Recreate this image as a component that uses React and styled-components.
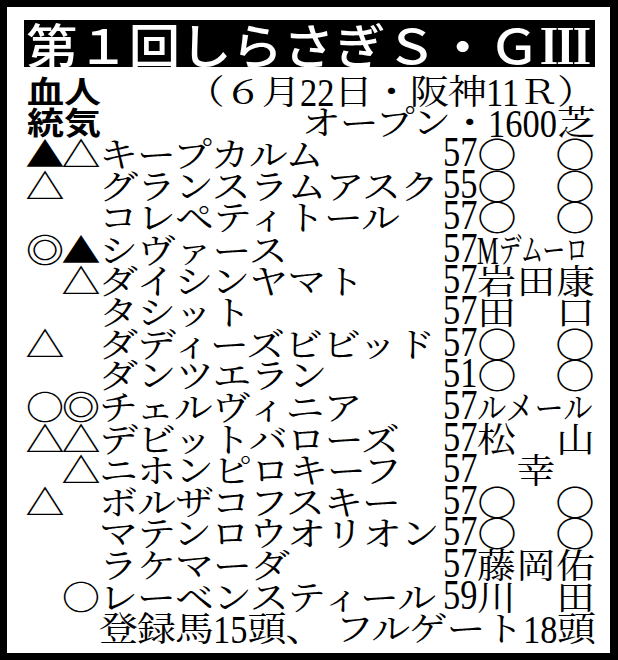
import React from 'react';
import styled, { createGlobalStyle } from 'styled-components';

const GOTHIC = `"Noto Sans CJK JP", "Noto Sans", sans-serif`;
const MINCHO = `"Noto Serif CJK JP", "Noto Sans CJK JP", serif`;
const NUMF = `"Liberation Serif", "DejaVu Serif", serif`;
const SY = 0.87;

const Global = createGlobalStyle`
  html, body { margin: 0; padding: 0; background: #fff; }
  body { width: 618px; height: 660px; overflow: hidden; }
`;

const Frame = styled.div`
  width: 618px;
  height: 660px;
  box-sizing: border-box;
  background: #000;
  padding: 7px 8px 7px 7px;
`;

const Sheet = styled.div`
  height: 100%;
  box-sizing: border-box;
  background: #fff;
  padding: 13px 15px 0 17px;
  display: flex;
  flex-direction: column;
`;

const TitleBar = styled.h1`
  margin: 0;
  height: 47px;
  background: #000;
  color: #fff;
  display: flex;
  align-items: center;
  font-family: ${GOTHIC};
  font-weight: 500;
  font-size: 48px;
  line-height: 47px;
`;

const TitleText = styled.span`
  display: inline-block;
  white-space: nowrap;
  padding-left: 2px;
  transform: scaleX(1.07);
  transform-origin: left center;
`;

const Roman = styled.span`
  font-family: ${MINCHO};
  font-weight: 700;
`;

const Body = styled.div`
  padding-left: 3px;
  display: flex;
  flex-direction: column;
`;

const Header = styled.div`
  margin-top: 8px;
  display: flex;
  flex-direction: column;
`;

const HeadLine = styled.div`
  height: 31px;
  display: flex;
  justify-content: space-between;
  align-items: center;
`;

const HeadLabel = styled.span`
  display: inline-block;
  font-family: ${GOTHIC};
  font-weight: 700;
  font-size: 37px;
  line-height: 31px;
  transform: scaleY(0.82);
  white-space: nowrap;
`;

const Stretch = styled.span`
  display: inline-block;
  font-family: ${MINCHO};
  font-weight: 400;
  font-size: 39px;
  letter-spacing: -1px;
  line-height: 31px;
  white-space: nowrap;
  transform: scaleY(${SY});
`;

const InNum = styled.span`
  display: inline-block;
  font-family: ${NUMF};
  font-weight: 400;
  font-size: 41px;
  letter-spacing: 0;
  transform: scale(0.84, ${1 / SY});
  transform-origin: left center;
  margin-right: ${(p) => -(p.$n || 2) * 3.3}px;
`;

const Rows = styled.div`
  display: flex;
  flex-direction: column;
`;

const Row = styled.div`
  height: 31.6px;
  display: grid;
  grid-template-columns: 36px 36px 344px 34px 118px;
  align-items: center;
`;

const Mark = styled(Stretch)`
  width: 36px;
  font-size: 39px;
  letter-spacing: 0;
  display: flex;
  justify-content: center;
`;

const Name = styled(Stretch)``;

const Weight = styled.span`
  display: inline-block;
  font-family: ${NUMF};
  font-size: 42px;
  line-height: 31px;
  transform: scaleX(0.82);
  transform-origin: left center;
  white-space: nowrap;
`;

const Jockey = styled.div`
  display: flex;
  justify-content: ${(p) => p.$align || 'space-between'};
  align-items: center;
`;

const JChar = styled(Stretch)`
  font-size: ${(p) => (p.$circle ? 40 : 39)}px;
  letter-spacing: 0;
`;

const Squeeze = styled(Stretch)`
  letter-spacing: 0;
  transform: scale(${(p) => p.$sx}, ${SY});
  transform-origin: left center;
`;

const MLetter = styled.span`
  display: inline-block;
  font-family: ${NUMF};
  font-size: 41px;
  transform: scaleY(${1 / SY});
`;

const FooterCell = styled.div`
  grid-column: 3 / -1;
  display: flex;
  justify-content: space-between;
  align-items: center;
`;

const N = ({ children }) => <InNum $n={String(children).length}>{children}</InNum>;

const horses = [
  { m1: '▲', m2: '△', name: 'キープカルム', w: '57', j: ['○', '○'] },
  { m1: '△', m2: '', name: 'グランスラムアスク', w: '55', j: ['○', '○'] },
  { m1: '', m2: '', name: 'コレペティトール', w: '57', j: ['○', '○'] },
  { m1: '◎', m2: '▲', name: 'シヴァース', w: '57', j: 'Mデムーロ', sx: 0.59 },
  { m1: '', m2: '△', name: 'ダイシンヤマト', w: '57', j: ['岩', '田', '康'] },
  { m1: '', m2: '', name: 'タシット', w: '57', j: ['田', '口'] },
  { m1: '△', m2: '', name: 'ダディーズビビッド', w: '57', j: ['○', '○'] },
  { m1: '', m2: '', name: 'ダンツエラン', w: '51', j: ['○', '○'] },
  { m1: '○', m2: '◎', name: 'チェルヴィニア', w: '57', j: 'ルメール', sx: 0.75 },
  { m1: '△', m2: '△', name: 'デビットバローズ', w: '57', j: ['松', '山'] },
  { m1: '', m2: '△', name: 'ニホンピロキーフ', w: '57', j: ['幸'], align: 'center' },
  { m1: '△', m2: '', name: 'ボルザコフスキー', w: '57', j: ['○', '○'] },
  { m1: '', m2: '', name: 'マテンロウオリオン', w: '57', j: ['○', '○'] },
  { m1: '', m2: '', name: 'ラケマーダ', w: '57', j: ['藤', '岡', '佑'] },
  { m1: '', m2: '○', name: 'レーベンスティール', w: '59', j: ['川', '田'] },
];

function JockeyCell({ h }) {
  if (typeof h.j === 'string') {
    const isM = h.j.startsWith('M');
    return (
      <Jockey $align="flex-start">
        <Squeeze $sx={h.sx}>
          {isM ? (
            <>
              <MLetter>M</MLetter>
              {h.j.slice(1)}
            </>
          ) : (
            h.j
          )}
        </Squeeze>
      </Jockey>
    );
  }
  return (
    <Jockey $align={h.align}>
      {h.j.map((c, i) => (
        <JChar key={i} $circle={c === '○'}>
          {c}
        </JChar>
      ))}
    </Jockey>
  );
}

export default function App() {
  return (
    <>
      <Global />
      <Frame>
        <Sheet>
          <TitleBar>
            <TitleText>
              第１回しらさぎＳ・Ｇ<Roman>Ⅲ</Roman>
            </TitleText>
          </TitleBar>
          <Body>
            <Header>
              <HeadLine>
                <HeadLabel>血人</HeadLabel>
                <Stretch>
                  （６月<N>22</N>日・阪神<N>11</N>Ｒ）
                </Stretch>
              </HeadLine>
              <HeadLine>
                <HeadLabel>統気</HeadLabel>
                <Stretch>
                  オープン・<N>1600</N>芝
                </Stretch>
              </HeadLine>
            </Header>
            <Rows>
              {horses.map((h) => (
                <Row key={h.name}>
                  <Mark>{h.m1}</Mark>
                  <Mark>{h.m2}</Mark>
                  <Name>{h.name}</Name>
                  <Weight>{h.w}</Weight>
                  <JockeyCell h={h} />
                </Row>
              ))}
              <Row>
                <FooterCell>
                  <Stretch>
                    登録馬<N>15</N>頭、
                  </Stretch>
                  <Stretch>
                    フルゲート<N>18</N>頭
                  </Stretch>
                </FooterCell>
              </Row>
            </Rows>
          </Body>
        </Sheet>
      </Frame>
    </>
  );
}
